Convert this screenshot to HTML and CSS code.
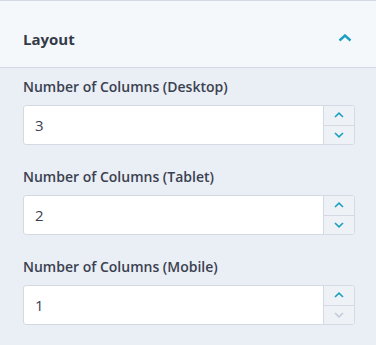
FILE: index.html
```html
<!DOCTYPE html>
<html lang="en">
<head>
    <meta charset="UTF-8">
    <meta name="viewport" content="width=device-width, initial-scale=1.0">
    <title>Layout</title>
    <link rel="stylesheet" href="styles.css">
</head>
<body>
    <div class="panel">
        <div class="panel_head">
            <h2 class="title">Layout</h2>
            <svg class="toggle" width="14" height="8" viewBox="0 0 14 8"><path d="M1.5 6.5 L7 1.5 L12.5 6.5" fill="none" stroke="#1a9fc0" stroke-width="2.4"/></svg>
        </div>
        <div class="panel_body">
            <div class="field">
                <label class="label">Number of Columns (Desktop)</label>
                <div class="num">
                    <div class="value">3</div>
                    <div class="spin">
                        <span class="up"><svg width="10" height="6" viewBox="0 0 10 6"><path d="M1 5 L5 1.2 L9 5" fill="none" stroke="#1a9fc0" stroke-width="1.6"/></svg></span>
                        <span class="down"><svg width="10" height="6" viewBox="0 0 10 6"><path d="M1 1 L5 4.8 L9 1" fill="none" stroke="#1a9fc0" stroke-width="1.6"/></svg></span>
                    </div>
                </div>
            </div>
            <div class="field">
                <label class="label">Number of Columns (Tablet)</label>
                <div class="num">
                    <div class="value">2</div>
                    <div class="spin">
                        <span class="up"><svg width="10" height="6" viewBox="0 0 10 6"><path d="M1 5 L5 1.2 L9 5" fill="none" stroke="#1a9fc0" stroke-width="1.6"/></svg></span>
                        <span class="down"><svg width="10" height="6" viewBox="0 0 10 6"><path d="M1 1 L5 4.8 L9 1" fill="none" stroke="#1a9fc0" stroke-width="1.6"/></svg></span>
                    </div>
                </div>
            </div>
            <div class="field">
                <label class="label">Number of Columns (Mobile)</label>
                <div class="num">
                    <div class="value">1</div>
                    <div class="spin">
                        <span class="up"><svg width="10" height="6" viewBox="0 0 10 6"><path d="M1 5 L5 1.2 L9 5" fill="none" stroke="#1a9fc0" stroke-width="1.6"/></svg></span>
                        <span class="down"><svg width="10" height="6" viewBox="0 0 10 6"><path d="M1 1 L5 4.8 L9 1" fill="none" stroke="#c3cbd8" stroke-width="1.6"/></svg></span>
                    </div>
                </div>
            </div>
        </div>
    </div>
</body>
</html>
```

FILE: styles.css
```css
* {margin: 0; padding: 0; box-sizing: border-box;}
body {background-color: #eaeef5; font-family: "Open Sans", "Liberation Sans", sans-serif; color: #3a4150;}

.panel {width: 376px; height: 345px; background-color: #eaeef5;}

.panel_head {height: 68px; background-color: #f5f8fb; border-top: 1px solid #d3dae4; border-bottom: 1px solid #d3dae4;
             display: flex; justify-content: space-between; align-items: center; padding: 9px 24px 0 23px;}
.panel_head .title {font-size: 15px; font-weight: 700; color: #333a48;}
.panel_head .toggle {margin-top: -1px;}

.panel_body {padding: 9px 21px 0 23px;}
.field {margin-bottom: 22px;}
.label {display: block; font-size: 14px; font-weight: 600; line-height: 20px; margin-bottom: 8px; color: #3a4150;}

.num {display: flex; height: 40px; background-color: #fff; border: 1px solid #d3dae4; border-radius: 3px; overflow: hidden;}
.num .value {flex: 1; padding-left: 11px; font-size: 15px; line-height: 38px; color: #3a4150;}
.num .spin {width: 31px; display: flex; flex-direction: column; background-color: #eef2f7; border-left: 1px solid #d3dae4;}
.num .spin span {flex: 1; display: flex; align-items: center; justify-content: center;}
.num .spin .up {border-bottom: 1px solid #d3dae4;}
```
